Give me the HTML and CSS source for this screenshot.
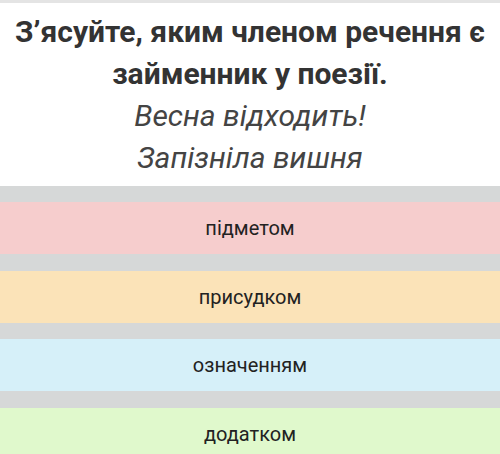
FILE: index.html
```html
<!DOCTYPE html>
<html lang="uk">
<head>
<meta charset="utf-8">
<link rel="stylesheet" href="styles.css">
</head>
<body>
<div class="card">
  <div class="question">
    <h1 class="title">З’ясуйте, яким членом речення є<br>займенник у поезії.</h1>
    <p class="poem">Весна відходить!<br>Запізніла вишня</p>
  </div>
  <ul class="options">
    <li class="option pink">підметом</li>
    <li class="option orange">присудком</li>
    <li class="option blue">означенням</li>
    <li class="option green">додатком</li>
  </ul>
</div>
</body>
</html>
```
FILE: styles.css
```css
html, body {
  margin: 0;
  padding: 0;
  background: #d6d8d8;
}
.card {
  width: 500px;
  font-family: Roboto, "Noto Sans", sans-serif;
}
.question {
  background: #ffffff;
  border-top: 3px solid #e4e4e4;
  padding: 8px 0 7px;
  text-align: center;
}
.title {
  margin: 0;
  font-size: 30px;
  line-height: 42px;
  font-weight: 700;
  color: #333333;
}
.poem {
  margin: 0;
  font-size: 30px;
  line-height: 42px;
  font-style: italic;
  color: #444444;
}
.options {
  list-style: none;
  margin: 0;
  padding: 16px 0 0;
  display: flex;
  flex-direction: column;
  gap: 16.5px;
  background: #d6d8d8;
}
.option {
  height: 52px;
  display: flex;
  align-items: center;
  justify-content: center;
  font-size: 20px;
  color: #222222;
}
.pink { background: #f6cdcd; }
.orange { background: #fbe3b8; }
.blue { background: #d6f0f9; }
.green { background: #e0f9cc; }
```
